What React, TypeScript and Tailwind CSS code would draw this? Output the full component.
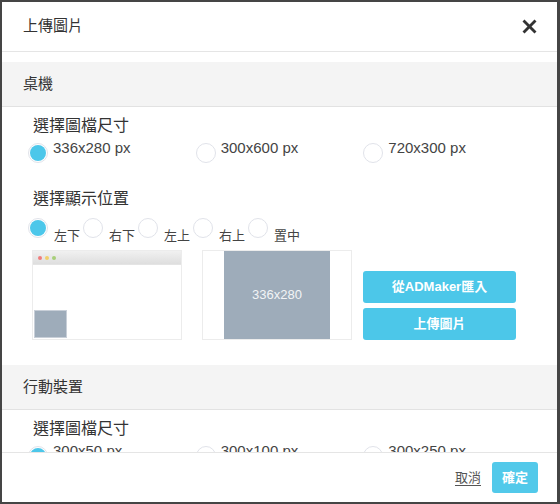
import React from "react";

const FONT = '"Liberation Sans", "Noto Sans CJK TC", sans-serif';

function Radio({ checked }: { checked?: boolean }) {
  return (
    <span className="flex h-[20px] w-[20px] shrink-0 items-center justify-center rounded-full border border-[#e1e3ea] bg-white">
      {checked && <span className="h-[16px] w-[16px] rounded-full bg-[#4cc7ea]" />}
    </span>
  );
}

function SizeRow({ sizes, selected }: { sizes: string[]; selected: number }) {
  return (
    <div className="mt-[6px] flex h-[20px]">
      {sizes.map((s, i) => (
        <div key={s} className="flex w-[170px] items-start">
          <Radio checked={i === selected} />
          <span className="ml-[5px] -mt-[4px] text-[15px] leading-[18px] text-[#444]">{s}</span>
        </div>
      ))}
    </div>
  );
}

function SectionBar({ title }: { title: string }) {
  return (
    <div className="flex h-[45px] items-center border-b border-[#e2e2e2] bg-[#f4f4f4] px-[21px] text-[15px] text-[#333]">
      {title}
    </div>
  );
}

function Title({ children, className = "" }: { children: React.ReactNode; className?: string }) {
  return <div className={"ml-[5px] text-[16px] leading-[22px] text-[#333] " + className}>{children}</div>;
}

export default function App() {
  const positions = ["左下", "右下", "左上", "右上", "置中"];

  return (
    <div
      className="box-border flex h-[504px] w-[560px] flex-col overflow-hidden border-2 border-r-[3px] border-[#454545] bg-white"
      style={{ fontFamily: FONT }}
    >
      {/* header */}
      <div className="flex h-[50px] shrink-0 items-center justify-between border-b border-[#e5e5e5] pl-[21px] pr-[20px]">
        <span className="text-[15px] text-[#333]">上傳圖片</span>
        <svg width="15" height="15" viewBox="0 0 15 15">
          <path
            d="M2.5 0.5 L7.5 5.5 L12.5 0.5 L14.5 2.5 L9.5 7.5 L14.5 12.5 L12.5 14.5 L7.5 9.5 L2.5 14.5 L0.5 12.5 L5.5 7.5 L0.5 2.5 Z"
            fill="#333"
          />
        </svg>
      </div>

      {/* body */}
      <div className="flex-1 overflow-hidden pt-[10px]">
        <SectionBar title="桌機" />
        <div className="px-[26px]">
          <Title className="mt-[8px]">選擇圖檔尺寸</Title>
          <SizeRow sizes={["336x280 px", "300x600 px", "720x300 px"]} selected={0} />

          <Title className="mt-[25px]">選擇顯示位置</Title>
          <div className="mt-[8px] flex h-[26px] items-start">
            {positions.map((p, i) => (
              <div key={p} className="flex items-start">
                <Radio checked={i === 0} />
                <span className="ml-[6px] mr-[3px] mt-[10px] text-[13px] leading-[16px] text-[#444]">{p}</span>
              </div>
            ))}
          </div>

          <div className="ml-[4px] mt-[6px] flex items-end">
            {/* browser preview */}
            <div className="relative box-border h-[90px] w-[150px] border border-[#ececec] bg-white">
              <div className="flex h-[14px] items-center gap-[3px] border-b border-[#e4e4e4] bg-gradient-to-b from-[#f1f1f1] to-[#dedede] pl-[5px]">
                <span className="h-[4px] w-[4px] rounded-full bg-[#f07c7c]" />
                <span className="h-[4px] w-[4px] rounded-full bg-[#f1cf6a]" />
                <span className="h-[4px] w-[4px] rounded-full bg-[#a8cf7a]" />
              </div>
              <div className="absolute bottom-[1px] left-[1px] h-[28px] w-[33px] border border-[#c8cfd8] bg-[#9eacba]" />
            </div>

            {/* size preview */}
            <div className="ml-[20px] box-border flex h-[90px] w-[150px] justify-center border border-[#ececec] bg-white">
              <div className="flex h-full w-[106px] items-center justify-center bg-[#9eacba] text-[13px] text-[#f2f4f6]">
                336x280
              </div>
            </div>

            <div className="ml-[11px] flex w-[153px] flex-col gap-[5px]">
              <button className="h-[32px] rounded-[3px] bg-[#4cc7e9] text-[13px] font-bold text-white">
                從ADMaker匯入
              </button>
              <button className="h-[32px] rounded-[3px] bg-[#4cc7e9] text-[13px] font-bold text-white">
                上傳圖片
              </button>
            </div>
          </div>
        </div>

        <div className="mt-[25px]">
          <SectionBar title="行動裝置" />
        </div>
        <div className="px-[26px]">
          <Title className="mt-[8px]">選擇圖檔尺寸</Title>
          <SizeRow sizes={["300x50 px", "300x100 px", "300x250 px"]} selected={0} />
        </div>
      </div>

      {/* footer */}
      <div className="flex h-[50px] shrink-0 items-center justify-end border-t border-[#e5e5e5] pr-[19px]">
        <a className="mr-[11px] text-[13px] text-[#555] underline underline-offset-[3px]">取消</a>
        <button className="h-[31px] w-[46px] rounded-[3px] bg-[#52c9ea] text-[13px] font-bold text-white">確定</button>
      </div>
    </div>
  );
}
